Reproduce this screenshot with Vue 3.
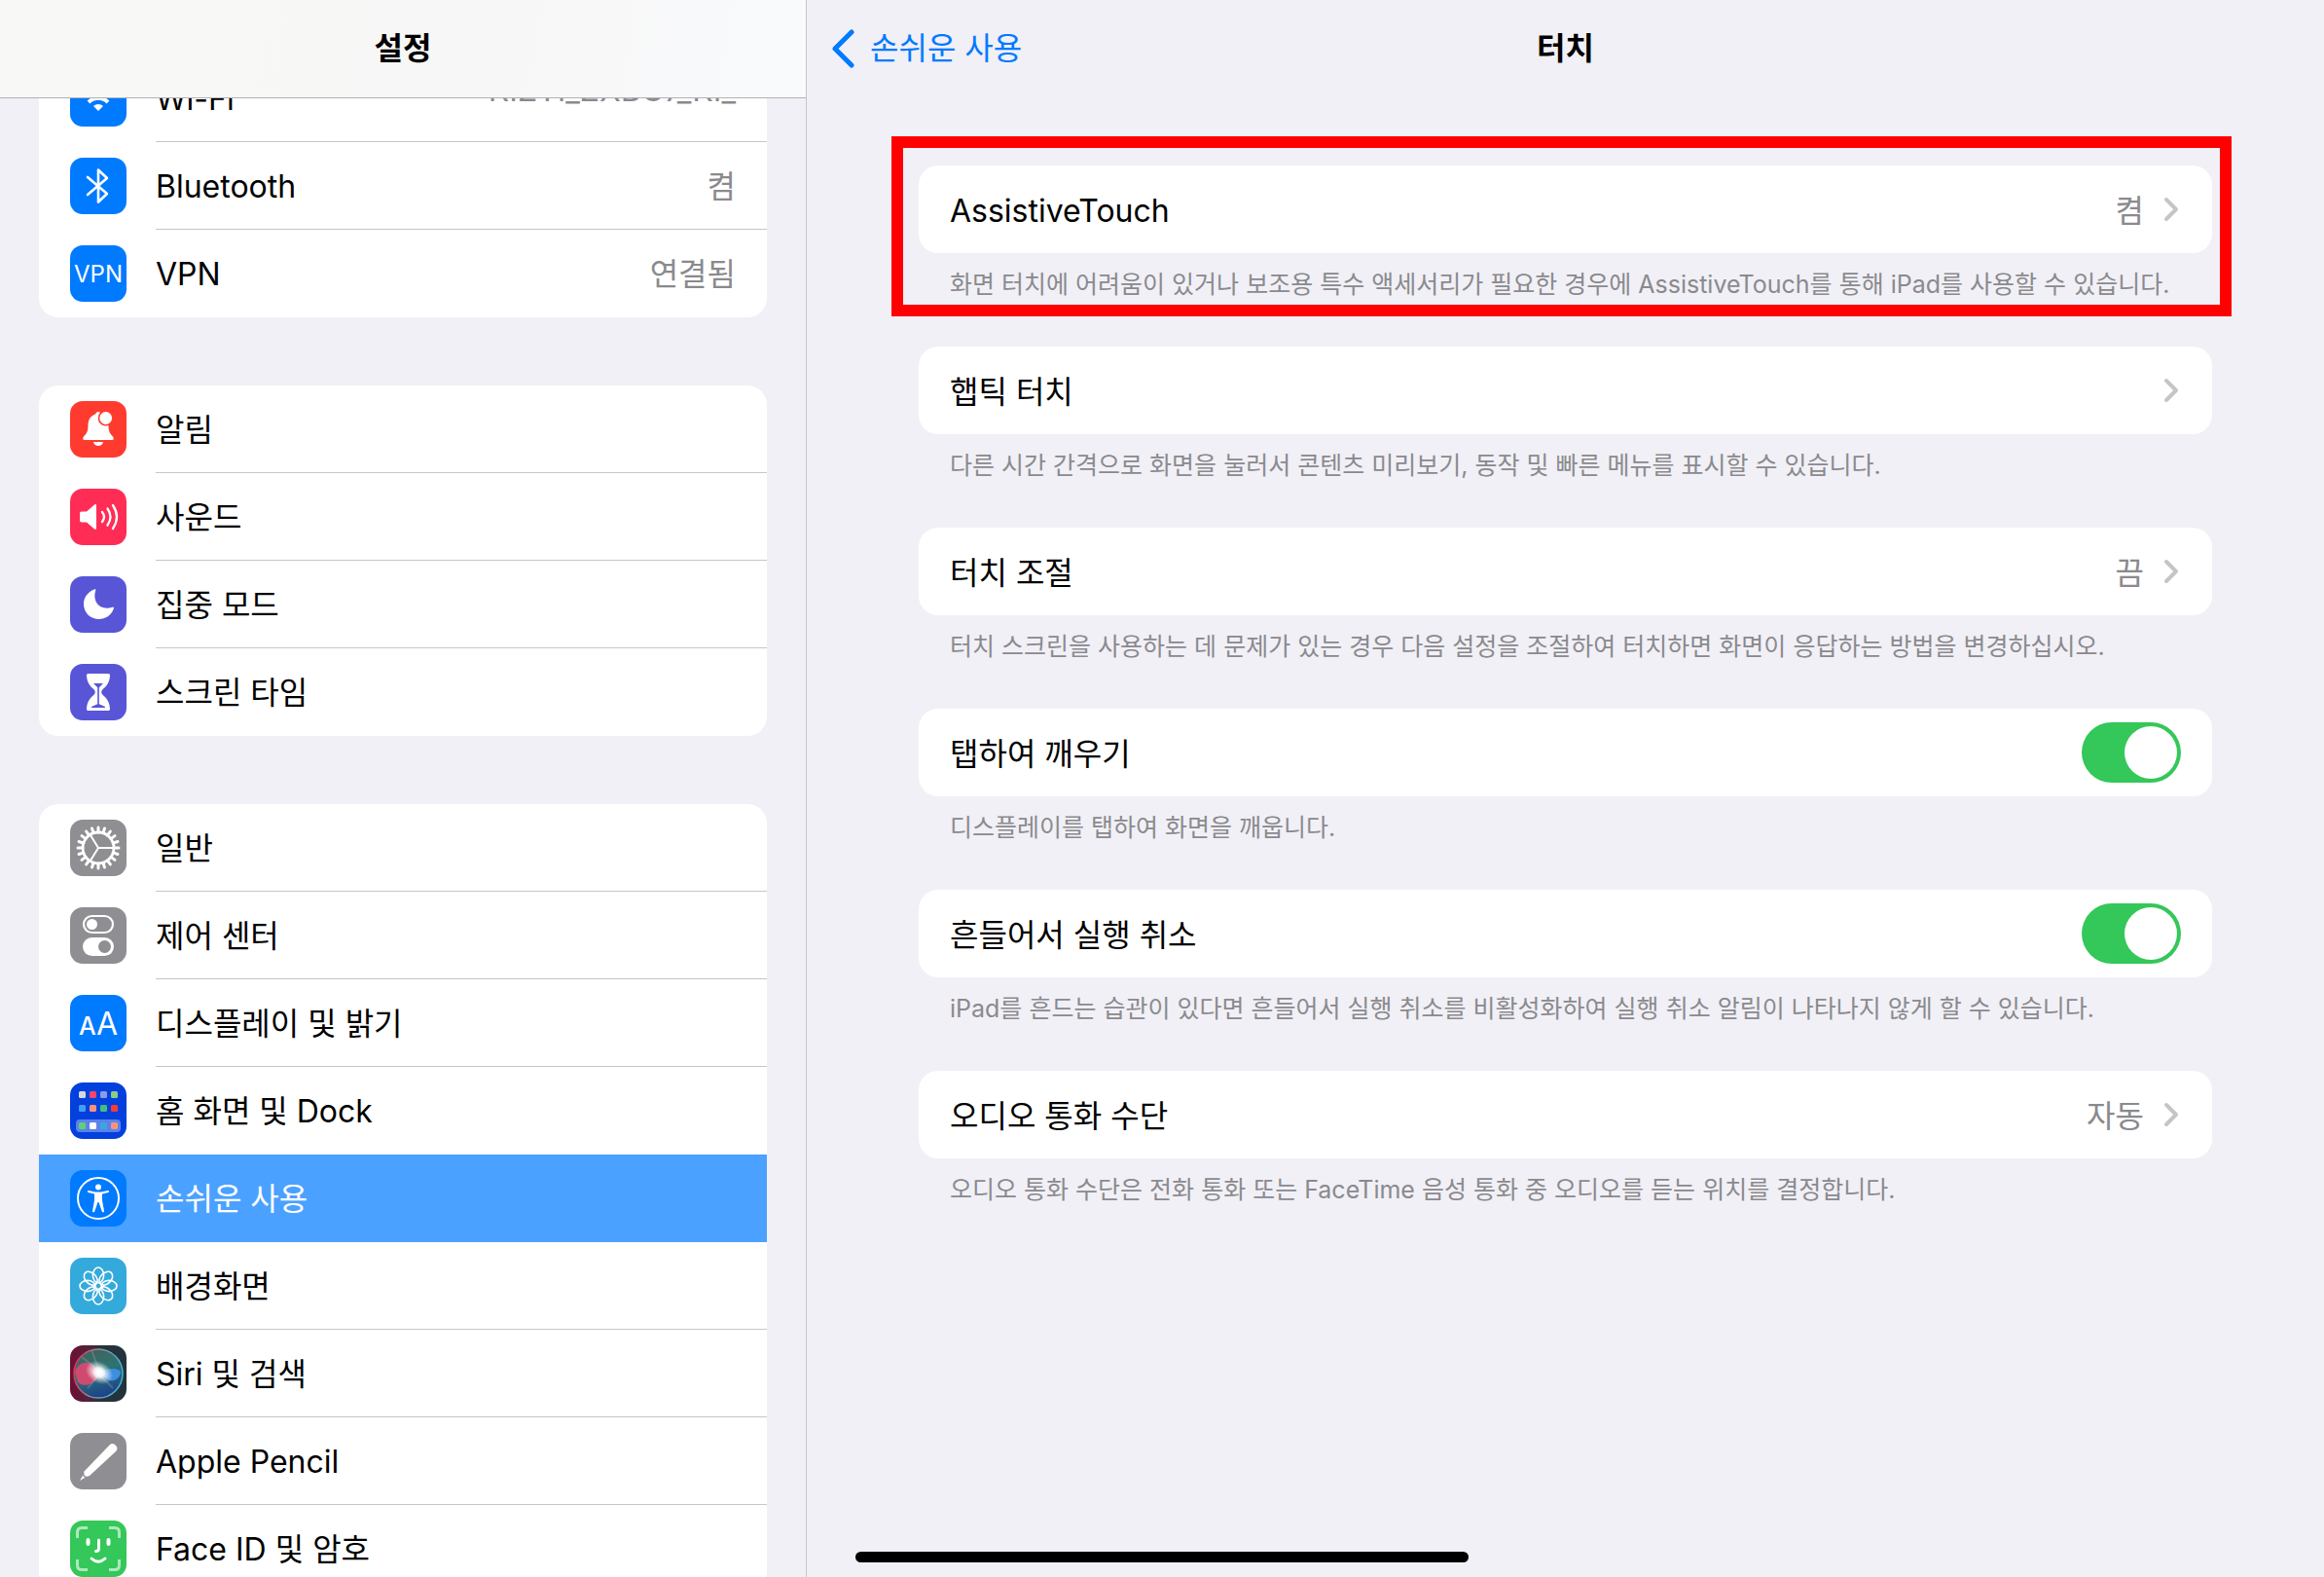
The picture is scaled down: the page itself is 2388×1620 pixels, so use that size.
<template>
    <div class="settings">
        <aside class="sidebar">
            <header class="bar sidebar-bar">
                <h1>설정</h1>
            </header>
            <nav class="sidebar-list">
                <ul v-for="(group, index) in groups" :key="index" class="group">
                    <li v-for="item in group" :key="item.icon">
                        <a
                            href="#"
                            class="item"
                            :class="{ selected: item.icon === selected }"
                            @click.prevent="selected = item.icon"
                        >
                            <svg class="icon" viewBox="0 0 58 58" aria-hidden="true">
                                <defs v-if="item.icon === 'siri'">
                                    <linearGradient id="siriBack" x1="0" x2="1" y1="0" y2="0">
                                        <stop offset="0" stop-color="#6d1034" />
                                        <stop offset="0.3" stop-color="#57203a" />
                                        <stop offset="0.55" stop-color="#26333c" />
                                        <stop offset="1" stop-color="#24323b" />
                                    </linearGradient>
                                    <linearGradient id="siriOrb" x1="0.3" x2="0.6" y1="0" y2="1">
                                        <stop offset="0" stop-color="#46605c" />
                                        <stop offset="0.45" stop-color="#2c7472" />
                                        <stop offset="1" stop-color="#1c3f8c" />
                                    </linearGradient>
                                    <linearGradient id="siriRing" x1="0" x2="1" y1="0.4" y2="0.6">
                                        <stop offset="0" stop-color="#f02c55" />
                                        <stop offset="0.4" stop-color="#8d8f98" />
                                        <stop offset="1" stop-color="#3cb7dc" />
                                    </linearGradient>
                                    <radialGradient id="siriGlow">
                                        <stop offset="0" stop-color="#fff" />
                                        <stop offset="0.35" stop-color="#fff" stop-opacity="0.85" />
                                        <stop offset="1" stop-color="#fff" stop-opacity="0" />
                                    </radialGradient>
                                </defs>
                                <rect width="58" height="58" rx="13" :fill="item.color" />
                                <g v-if="item.icon === 'wifi'" fill="none" stroke="#fff" stroke-width="4">
                                    <path d="M9 25a28 28 0 0 1 40 0M19 33a14 14 0 0 1 20 0" />
                                    <path d="M24 37a7 7 0 0 1 10 0l-5 5z" fill="#fff" stroke="none" />
                                </g>
                                <path
                                    v-else-if="item.icon === 'bluetooth'"
                                    d="M18 20l20 17-9 8.500V12.500L38 21 18 38"
                                    fill="none"
                                    stroke="#fff"
                                    stroke-width="2.6"
                                    stroke-linejoin="round"
                                    stroke-linecap="round"
                                />
                                <text v-else-if="item.icon === 'vpn'" x="29" y="38" font-size="24" text-anchor="middle">VPN</text>
                                <g v-else-if="item.icon === 'bell'" fill="#fff">
                                    <path d="M29 11c-1.500 0-2.500 1-3 2.500-5.500 2-7.500 6-7.500 12 0 6-2 8.500-4.500 11-1.500 2-1 3.500 1 3.500h28c2 0 2.500-1.500 1-3.500-2.500-2.500-4.500-5-4.500-11 0-6-2-10-7.500-12-.5-1.500-1.500-2.500-3-2.500zM24 42h10c-.5 2.500-2.500 4-5 4s-4.500-1.500-5-4z" />
                                    <circle cx="36.700" cy="17.500" r="7.200" stroke="#ff3b30" stroke-width="1.600" />
                                </g>
                                <g v-else-if="item.icon === 'sound'" fill="none" stroke="#fff" stroke-width="2.300" stroke-linecap="round">
                                    <path d="M12 23.500h5l8-7c1-.8 2-.4 2 1v23c0 1.400-1 1.800-2 1l-8-7h-5c-1.300 0-2-.7-2-2v-7c0-1.300.7-2 2-2z" fill="#fff" stroke="none" />
                                    <path d="M33 24q4 5 0 10M38.500 20.500q6 8.500 0 17M44 17q8 12 0 24" />
                                </g>
                                <path
                                    v-else-if="item.icon === 'moon'"
                                    d="M25 13.500C18 16 14 22 14 28.500 14 37.500 21 44 29.500 44c7 0 13-4 15.400-11 .4-1-.4-1.600-1.400-1.200C31 36 22.500 26 26.300 14.600c.3-1-.3-1.500-1.300-1.100z"
                                    fill="#fff"
                                />
                                <g v-else-if="item.icon === 'hourglass'">
                                    <path d="M19 10h20c1.500 0 2.200.8 2 2.300-.6 7-3.300 10.500-7.300 13.700-2 1.700-2 4.300 0 6 4 3.200 6.700 6.700 7.300 13.700.2 1.500-.5 2.300-2 2.300H19c-1.500 0-2.200-.8-2-2.300.6-7 3.300-10.500 7.300-13.700 2-1.700 2-4.300 0-6-4-3.200-6.700-6.700-7.300-13.700-.2-1.500.5-2.300 2-2.300z" fill="#fff" />
                                    <path d="M24 20h10l-4.200 4.200v17L36 44v1H22v-1l6.200-2.800v-17z" fill="#5856d6" />
                                </g>
                                <g v-else-if="item.icon === 'gear'" fill="none" stroke="#fff">
                                    <circle cx="29" cy="29" r="16" stroke-width="2.800" />
                                    <path
                                        v-for="n in 20"
                                        :key="n"
                                        d="M45 29h5"
                                        stroke-width="3"
                                        stroke-linecap="round"
                                        :transform="`rotate(${n * 18} 29 29)`"
                                    />
                                    <path d="M29 29h15M29 29l-8-13M29 29l-8 13" stroke-width="2" />
                                </g>
                                <g v-else-if="item.icon === 'control'" fill="#fff">
                                    <rect x="14" y="9" width="30" height="17" rx="8.500" fill="none" stroke="#fff" stroke-width="2.200" />
                                    <circle cx="22.500" cy="17.500" r="5.500" />
                                    <rect x="13" y="31" width="32" height="19" rx="9.500" />
                                    <circle cx="35.500" cy="40.500" r="6.500" fill="#8e8e93" />
                                </g>
                                <g v-else-if="item.icon === 'display'">
                                    <text x="9" y="41" font-size="25" font-weight="500">A</text>
                                    <text x="27" y="41" font-size="32">A</text>
                                </g>
                                <g v-else-if="item.icon === 'home'">
                                    <rect x="6" y="38" width="46" height="13" rx="4" fill="#5b82ea" />
                                    <rect
                                        v-for="(color, n) in tiles"
                                        :key="n"
                                        :x="9 + (n % 4) * 11"
                                        :y="[9, 23, 41][Math.floor(n / 4)]"
                                        width="7"
                                        height="7"
                                        rx="1.500"
                                        :fill="color"
                                    />
                                </g>
                                <g v-else-if="item.icon === 'access'" fill="#fff">
                                    <circle cx="29" cy="29" r="21" fill="none" stroke="#fff" stroke-width="2" />
                                    <circle cx="29" cy="17.500" r="3" />
                                    <path d="M19 21l7 1.500h6l7-1.500c1.300-.2 1.600 1.700.3 2L33 24.500v6.500l2 11c.2 1.500-1.800 1.900-2.200.5L29.500 33h-1l-3.300 9.500c-.4 1.400-2.400 1-2.200-.5l2-11v-6.500L18.700 23c-1.300-.3-1-2.200.3-2z" />
                                </g>
                                <g v-else-if="item.icon === 'flower'" fill="none" stroke="#fff" stroke-width="1.600">
                                    <ellipse
                                        v-for="n in 8"
                                        :key="n"
                                        cx="29"
                                        cy="18"
                                        rx="5.600"
                                        ry="8"
                                        :transform="`rotate(${n * 45} 29 29)`"
                                    />
                                </g>
                                <g v-else-if="item.icon === 'siri'">
                                    <circle cx="29" cy="29" r="25" fill="url(#siriOrb)" stroke="url(#siriRing)" stroke-width="1.500" />
                                    <path d="M5 27c4-10 14-12 20-5l5 8c-5 10-15 14-22 8z" fill="#cf4a70" />
                                    <path d="M30 28c8-4 17-6 22-1-1 9-9 11-14 8z" fill="#3d8ee0" />
                                    <path d="M12 12l18 14L22 5M30 30l14 14M30 30l-12 14" fill="none" stroke="#9db0b5" stroke-opacity="0.3" stroke-width="2" />
                                    <ellipse cx="30" cy="28" rx="15" ry="11" transform="rotate(30 30 28)" fill="url(#siriGlow)" />
                                    <circle cx="30" cy="28" r="7" fill="url(#siriGlow)" />
                                </g>
                                <g v-else-if="item.icon === 'pencil'" fill="#fff">
                                    <path d="M14.500 39.500L40.500 12.500a4.600 4.600 0 0 1 6.500 6.500L20 44c-2 1-4 1-5-.2-.8-1-.9-3-.5-4.300z" />
                                    <path d="M10 49l3.200-5.500c.3 1.200 1.200 2 2.500 2.300z" />
                                </g>
                                <g v-else-if="item.icon === 'faceid'" fill="none" stroke="#fff" stroke-width="3" stroke-linecap="round">
                                    <path d="M7.500 18v-6q0-4.500 4.500-4.500h6M40 7.500h6q4.500 0 4.500 4.500v6M50.500 40v6q0 4.500-4.500 4.500h-6M18 50.500h-6q-4.500 0-4.500-4.500v-6" stroke-opacity="0.6" stroke-linecap="butt" />
                                    <path d="M18.500 20v4M39.500 20v4" stroke-width="4" />
                                    <path d="M29.500 20v9q0 2.500-3 2.500" />
                                    <path d="M22 39q7 6.500 14 0" />
                                </g>
                            </svg>
                            <span class="item-body">
                                <span>{{ item.label }}</span>
                                <span v-if="item.value" class="value" :class="{ network: item.icon === 'wifi' }">{{ item.value }}</span>
                            </span>
                        </a>
                    </li>
                </ul>
            </nav>
        </aside>

        <main class="detail">
            <header class="bar detail-bar">
                <a href="#" class="back">
                    <svg viewBox="0 0 24 40" aria-hidden="true">
                        <path d="M21 3L4 20l17 17" fill="none" stroke="currentColor" stroke-width="5" stroke-linecap="round" stroke-linejoin="round" />
                    </svg>
                    손쉬운 사용
                </a>
                <h2>터치</h2>
            </header>
            <section v-for="option in options" :key="option.label" class="option" :class="{ marked: option.marked }">
                <label v-if="option.toggle" class="card">
                    <span class="label">{{ option.label }}</span>
                    <input v-model="option.on" type="checkbox" class="switch" />
                </label>
                <button v-else type="button" class="card">
                    <span class="label">{{ option.label }}</span>
                    <span class="card-end">
                        <span class="value label">{{ option.value }}</span>
                        <svg class="chevron" viewBox="0 0 16 26" aria-hidden="true">
                            <path d="M3 3l10 10L3 23" fill="none" stroke="#c5c5c7" stroke-width="4" stroke-linecap="round" stroke-linejoin="round" />
                        </svg>
                    </span>
                </button>
                <p>{{ option.note }}</p>
            </section>
        </main>
        <div class="home-indicator"></div>
    </div>
</template>

<script setup>
import { ref } from 'vue';

const selected = ref('access');

const groups = [
    [
        { icon: 'wifi', label: 'Wi-Fi', color: '#007aff', value: 'KIZTI_ZXBG7_KI_' },
        { icon: 'bluetooth', label: 'Bluetooth', color: '#007aff', value: '켬' },
        { icon: 'vpn', label: 'VPN', color: '#007aff', value: '연결됨' }
    ],
    [
        { icon: 'bell', label: '알림', color: '#ff3b30' },
        { icon: 'sound', label: '사운드', color: '#ff2d55' },
        { icon: 'moon', label: '집중 모드', color: '#5856d6' },
        { icon: 'hourglass', label: '스크린 타임', color: '#5856d6' }
    ],
    [
        { icon: 'gear', label: '일반', color: '#8e8e93' },
        { icon: 'control', label: '제어 센터', color: '#8e8e93' },
        { icon: 'display', label: '디스플레이 및 밝기', color: '#007aff' },
        { icon: 'home', label: '홈 화면 및 Dock', color: '#0340dd' },
        { icon: 'access', label: '손쉬운 사용', color: '#007aff' },
        { icon: 'flower', label: '배경화면', color: '#34aadc' },
        { icon: 'siri', label: 'Siri 및 검색', color: 'url(#siriBack)' },
        { icon: 'pencil', label: 'Apple Pencil', color: '#8e8e93' },
        { icon: 'faceid', label: 'Face ID 및 암호', color: '#34c759' }
    ]
];

// app tiles on the home screen icon, the last four sit in the dock
const tiles = [
    '#d5d8de', '#fc4468', '#8b9ae6', '#8ecb84',
    '#3fa0f0', '#f9937c', '#45c07c', '#fb3b35',
    '#5fd07a', '#ffffff', '#34aadc', '#f9937c'
];

const options = ref([
    {
        label: 'AssistiveTouch',
        value: '켬',
        marked: true,
        note: '화면 터치에 어려움이 있거나 보조용 특수 액세서리가 필요한 경우에 AssistiveTouch를 통해 iPad를 사용할 수 있습니다.'
    },
    {
        label: '햅틱 터치',
        note: '다른 시간 간격으로 화면을 눌러서 콘텐츠 미리보기, 동작 및 빠른 메뉴를 표시할 수 있습니다.'
    },
    {
        label: '터치 조절',
        value: '끔',
        note: '터치 스크린을 사용하는 데 문제가 있는 경우 다음 설정을 조절하여 터치하면 화면이 응답하는 방법을 변경하십시오.'
    },
    {
        label: '탭하여 깨우기',
        toggle: true,
        on: true,
        note: '디스플레이를 탭하여 화면을 깨웁니다.'
    },
    {
        label: '흔들어서 실행 취소',
        toggle: true,
        on: true,
        note: 'iPad를 흔드는 습관이 있다면 흔들어서 실행 취소를 비활성화하여 실행 취소 알림이 나타나지 않게 할 수 있습니다.'
    },
    {
        label: '오디오 통화 수단',
        value: '자동',
        note: '오디오 통화 수단은 전화 통화 또는 FaceTime 음성 통화 중 오디오를 듣는 위치를 결정합니다.'
    }
]);
</script>

<style>
body {
    margin: 0;
    background: #f1f0f6;
}
</style>

<style scoped>
.settings {
    position: relative;
    display: grid;
    grid-template-columns: 829fr 1559fr;
    height: 100vh;
    overflow: hidden;
    background: #f1f0f6;
    color: #000;
    font-family: Inter, "Noto Sans CJK KR", sans-serif;
    font-size: 32px;
    line-height: 48px;
}

.sidebar {
    display: flex;
    flex-direction: column;
    min-width: 0;
    min-height: 0;
    border-right: 1px solid #c6c6c8;
}

.bar {
    display: flex;
    flex-shrink: 0;
    align-items: center;
    justify-content: center;
    height: 100px;
}

.sidebar-bar {
    background: linear-gradient(100deg, #f8f8f6, #f7f7f7 60%, #f9fafc);
    border-bottom: 1px solid #b2b2b6;
}

h1,
h2 {
    margin: 0;
    font-size: 32px;
    font-weight: 600;
}

.sidebar-list {
    flex: 1;
    min-height: 0;
    padding: 0 40px;
    overflow: hidden;
}

.group {
    margin: 0 0 70px;
    padding: 0;
    list-style: none;
    background: #fff;
    border-radius: 20px;
}

/* list is scrolled, the first row slides under the title bar */
.group:first-child {
    margin-top: -45px;
}

.item {
    display: flex;
    align-items: center;
    gap: 30px;
    height: 90px;
    padding-left: 32px;
    color: inherit;
    text-decoration: none;
}

.icon {
    flex-shrink: 0;
    width: 58px;
    height: 58px;
}

.icon text {
    fill: #fff;
}

.item-body {
    display: flex;
    flex: 1;
    align-items: center;
    justify-content: space-between;
    box-sizing: border-box;
    height: 90px;
    padding: 3px 32px 0 0;
    border-bottom: 1px solid #c6c6c8;
}

li:last-child .item-body,
li:has(+ li .selected) .item-body,
.selected .item-body {
    border-bottom-color: transparent;
}

.selected {
    background: #4ba1ff;
    color: #fff;
}

.value {
    color: #8a8a8e;
}

.network {
    padding-bottom: 18px;
}

.detail {
    min-width: 0;
}

.detail-bar {
    display: grid;
    grid-template-columns: 1fr auto 1fr;
    margin-bottom: 70px;
}

.back {
    display: flex;
    align-items: center;
    gap: 16px;
    padding-left: 25px;
    color: #007aff;
    text-decoration: none;
}

.back svg {
    width: 24px;
    height: 40px;
}

.option {
    position: relative;
    margin: 0 115px 46px;
}

.marked::after {
    content: "";
    position: absolute;
    inset: -30px -20px -15px -28px;
    border: 12px solid #f00;
    pointer-events: none;
}

.card {
    display: flex;
    align-items: center;
    justify-content: space-between;
    box-sizing: border-box;
    width: 100%;
    height: 90px;
    padding: 0 32px;
    border: 0;
    border-radius: 20px;
    background: #fff;
    color: inherit;
    font: inherit;
    text-align: left;
}

.label {
    padding-top: 3px;
}

.card-end {
    display: flex;
    align-items: center;
    gap: 20px;
    padding-right: 2px;
}

.chevron {
    width: 16px;
    height: 26px;
}

.option p {
    margin: 0;
    padding: 14px 32px 0;
    color: #8a8a8e;
    font-size: 25px;
    line-height: 36px;
    white-space: nowrap;
}

.switch {
    display: flex;
    appearance: none;
    width: 102px;
    height: 62px;
    margin: 0;
    padding: 4px;
    box-sizing: border-box;
    border-radius: 31px;
    background: #e9e9ea;
}

.switch::before {
    content: "";
    width: 54px;
    height: 54px;
    border-radius: 50%;
    background: #fff;
}

.switch:checked {
    justify-content: flex-end;
    background: #34c759;
}

.home-indicator {
    position: absolute;
    bottom: 15px;
    left: 50%;
    width: 630px;
    height: 11px;
    border-radius: 6px;
    background: #000;
    transform: translateX(-50%);
}
</style>
